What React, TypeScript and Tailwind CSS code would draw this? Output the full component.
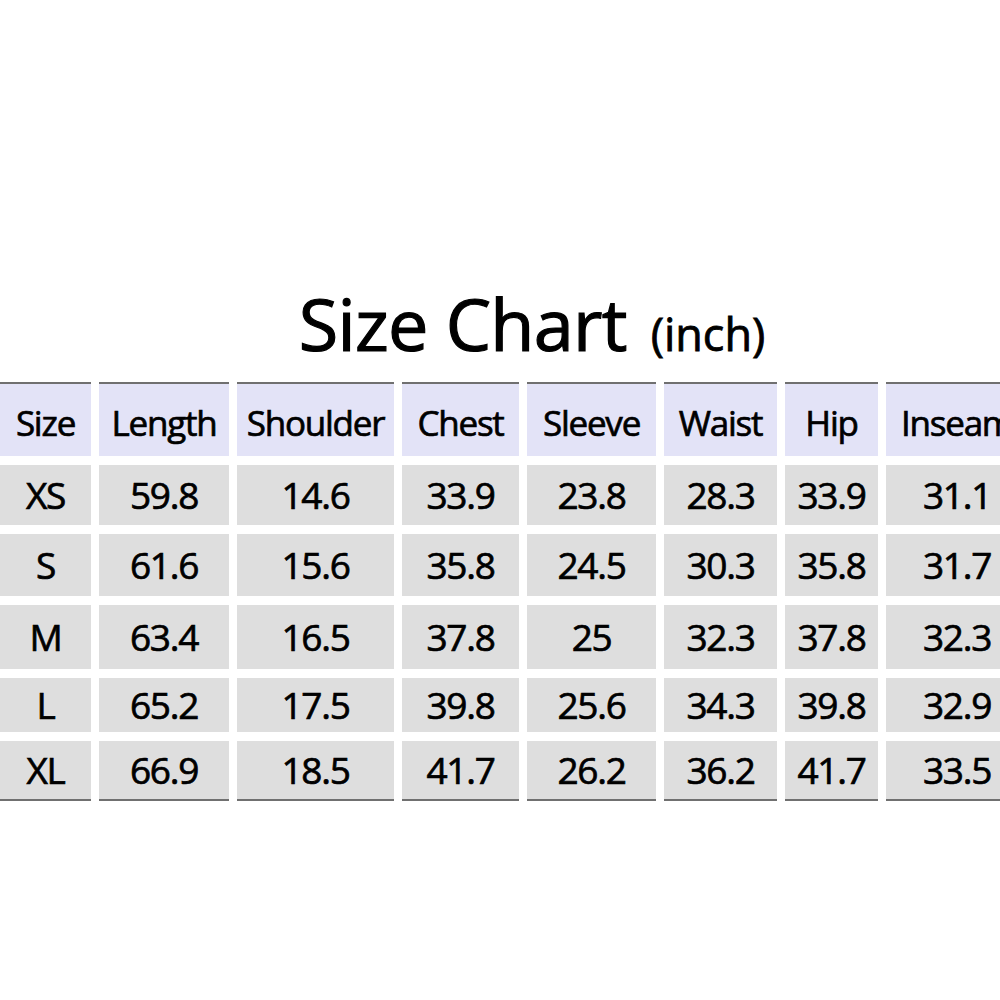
import React from 'react';

const headers = ['Size', 'Length', 'Shoulder', 'Chest', 'Sleeve', 'Waist', 'Hip', 'Inseam'];

const rows: string[][] = [
  ['XS', '59.8', '14.6', '33.9', '23.8', '28.3', '33.9', '31.1'],
  ['S', '61.6', '15.6', '35.8', '24.5', '30.3', '35.8', '31.7'],
  ['M', '63.4', '16.5', '37.8', '25', '32.3', '37.8', '32.3'],
  ['L', '65.2', '17.5', '39.8', '25.6', '34.3', '39.8', '32.9'],
  ['XL', '66.9', '18.5', '41.7', '26.2', '36.2', '41.7', '33.5'],
];

const font = { fontFamily: '"Open Sans", "Noto Sans", sans-serif' };

export default function App() {
  return (
    <div className="h-[1000px] w-[1000px] overflow-hidden bg-white pt-[288px] text-black" style={font}>
      <div className="flex items-baseline justify-center pl-[64px] [-webkit-text-stroke:1.2px_black]">
        <span className="text-[72px] leading-[70px] tracking-[-0.01em]">Size Chart</span>
        <span className="ml-[24px] text-[45px] leading-[45px] [-webkit-text-stroke:0.8px_black]">(inch)</span>
      </div>

      <div className="mt-[24px] grid w-[1028px] grid-cols-[91px_130px_157px_117px_129px_113px_93px_142px] grid-rows-[74px_60px_62px_64px_54px_60px] gap-x-[8px] gap-y-[9px] [-webkit-text-stroke:0.7px_black]">
        {headers.map(h => (
          <div
            key={h}
            className="flex items-center justify-center border-t-2 border-[#707070] bg-[#e3e3f7] pt-[6px] text-[35px] tracking-[-0.035em]"
          >
            {h}
          </div>
        ))}
        {rows.map((row, r) =>
          row.map((v, c) => (
            <div
              key={`${r}-${c}`}
              className={`flex items-center justify-center bg-[#dedede] text-[37px] tracking-[-0.035em] ${r === rows.length - 1 ? 'border-b-2 border-[#707070]' : ''}`}
            >
              {v}
            </div>
          ))
        )}
      </div>
    </div>
  );
}
